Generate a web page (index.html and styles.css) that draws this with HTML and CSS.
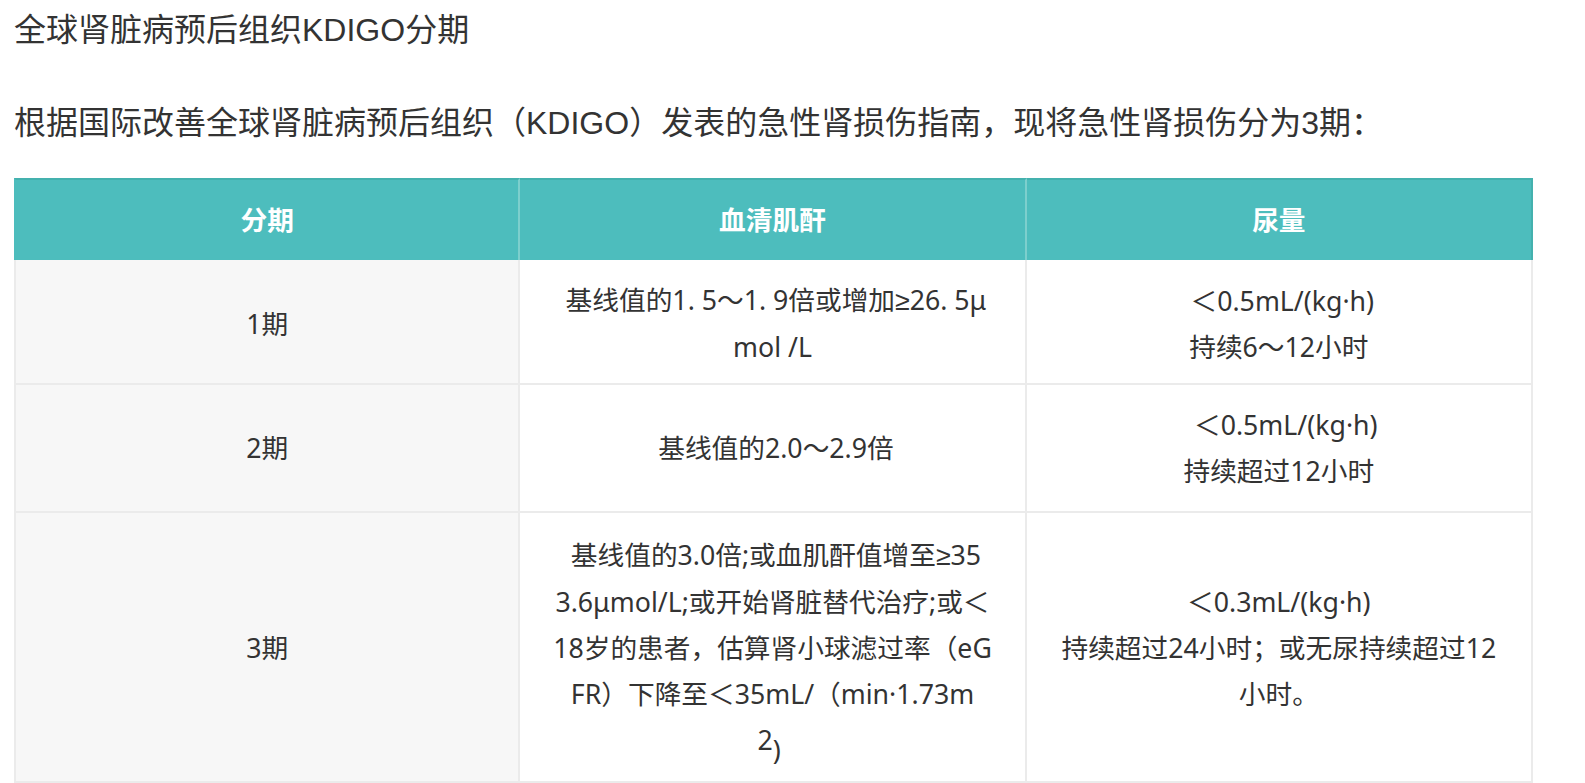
FILE: index.html
```html
<!DOCTYPE html>
<html lang="zh-CN">
<head>
<meta charset="utf-8">
<title>全球肾脏病预后组织KDIGO分期</title>
<link rel="stylesheet" href="styles.css">
</head>
<body>
<main class="page">
  <h1 class="title">全球肾脏病预后组织KDIGO分期</h1>
  <p class="intro">根据国际改善全球肾脏病预后组织（KDIGO）发表的急性肾损伤指南，现将急性肾损伤分为3期：</p>
  <table class="stage-table">
    <colgroup>
      <col class="col-stage">
      <col class="col-scr">
      <col class="col-urine">
    </colgroup>
    <thead>
      <tr class="head-row">
        <th>分期</th>
        <th>血清肌酐</th>
        <th>尿量</th>
      </tr>
    </thead>
    <tbody>
      <tr class="row-1">
        <td class="stage">1期</td>
        <td>&nbsp;基线值的1. 5～1. 9倍或增加<span class="sym">≥</span>26. 5μ<br>mol /L</td>
        <td>&nbsp;＜0.5mL/(kg·h)<br>持续6～12小时</td>
      </tr>
      <tr class="row-2">
        <td class="stage">2期</td>
        <td>&nbsp;基线值的2.0～2.9倍</td>
        <td>&nbsp;&nbsp;＜0.5mL/(kg·h)<br>持续超过12小时</td>
      </tr>
      <tr class="row-3">
        <td class="stage">3期</td>
        <td>&nbsp;基线值的3.0倍;或血肌酐值增至<span class="sym">≥</span>35<br>3.6μmol/L;或开始肾脏替代治疗;或＜<br>18岁的患者，估算肾小球滤过率（eG<br>FR）下降至＜35mL/（min·1.73m<br>2<span class="low">)</span>&nbsp;</td>
        <td>＜0.3mL/(kg·h)<br>持续超过24小时；或无尿持续超过12<br>小时。</td>
      </tr>
    </tbody>
  </table>
</main>
</body>
</html>
```

FILE: styles.css
```css
html, body {
  margin: 0;
  padding: 0;
  background: #ffffff;
}

body {
  color: #333333;
}

.page {
  padding: 6px 0 0 14px;
  width: 1519px;
}

.title,
.intro {
  margin: 0;
  font-family: "Liberation Sans", "Noto Sans CJK SC", sans-serif;
  font-size: 32px;
  line-height: 48px;
  font-weight: 400;
  color: #333333;
}

.intro {
  margin-top: 45px;
  margin-bottom: 31px;
}

.stage-table {
  width: 1519px;
  table-layout: fixed;
  border-collapse: separate;
  border-spacing: 0;
  font-family: "Noto Sans", "Noto Sans CJK SC", sans-serif;
  font-size: 26.7px;
  line-height: 46px;
  text-align: center;
  color: #333333;
}

.stage-table col {
  width: 33.333%;
}

.head-row th {
  height: 80px;
  padding: 0 10px;
  background: #4dbdbd;
  color: #ffffff;
  font-weight: 700;
  border-top: 2px solid #44b1ae;
  border-right: 2px solid #7dcfcd;
}

.head-row th:first-child {
  border-left: 2px solid #4dbdbd;
}

.head-row th:last-child {
  border-right: 2px solid #44b1ae;
}

.stage-table td {
  padding: 17px 10px 13px;
  vertical-align: middle;
  background: #ffffff;
  border-right: 2px solid #ebebeb;
  border-bottom: 2px solid #ebebeb;
  word-break: break-all;
}

.stage-table td:first-child {
  border-left: 2px solid #ebebeb;
}

.stage-table td.stage {
  background: #f7f7f7;
}

.row-2 td {
  padding-bottom: 17px;
}

.row-3 td {
  padding-top: 19px;
  padding-bottom: 18px;
}

.sym {
  font-family: "Liberation Sans", "DejaVu Sans", sans-serif;
}

.low {
  position: relative;
  top: 10px;
  line-height: 0;
}
```
